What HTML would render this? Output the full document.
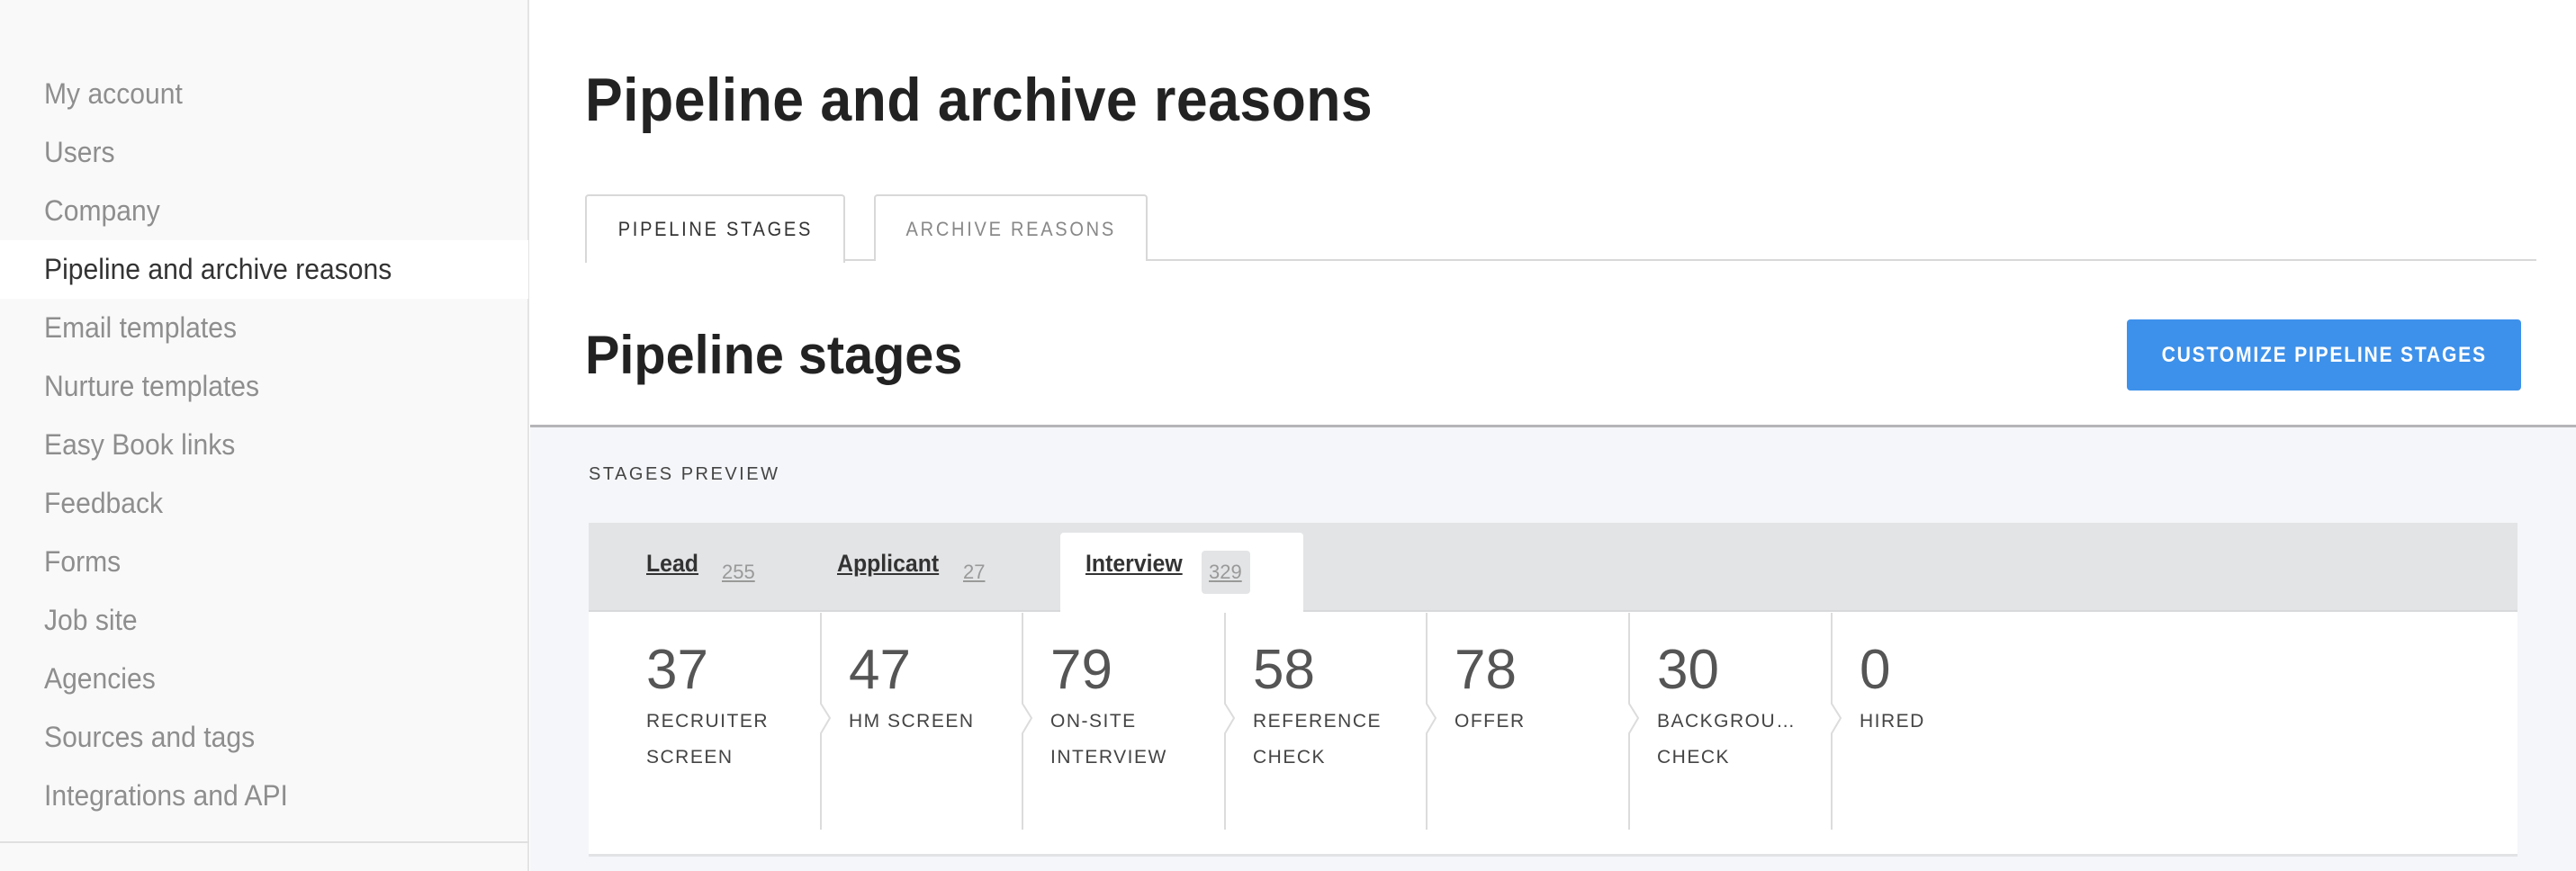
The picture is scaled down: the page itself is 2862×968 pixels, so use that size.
<!DOCTYPE html>
<html><head><meta charset="utf-8"><style>
*{margin:0;padding:0;box-sizing:border-box}
body{width:2862px;height:968px;overflow:hidden;background:#fff;font-family:"Liberation Sans Narrow","Liberation Sans",sans-serif;position:relative}
.side{position:absolute;left:0;top:0;width:588px;height:968px;background:#f9f9f9;border-right:2px solid #e4e4e4}
.side .bl{position:absolute;left:0;top:935px;width:588px;height:2px;background:#e0e0e0}
.nav{position:absolute;left:49px;font-size:32px;color:#8e8e8e;line-height:40px;transform:scaleX(0.94);transform-origin:0 0;white-space:nowrap}
.act{position:absolute;left:0;top:267px;width:587px;height:65px;background:#fff}
.abs{position:absolute}
h1{position:absolute;left:650px;top:72px;font-size:68px;font-weight:bold;color:#222;letter-spacing:0.5px;transform:scaleX(0.92);transform-origin:0 0;white-space:nowrap}
h2{position:absolute;left:650px;top:360px;font-size:60px;font-weight:bold;color:#222;transform:scaleX(0.96);transform-origin:0 0;white-space:nowrap}
.tab{position:absolute;top:216px;height:74px;border:2px solid #d8d8d8;border-bottom:none;border-radius:4px 4px 0 0;font-size:22px;letter-spacing:3px;text-align:center;line-height:74px;color:#333;background:#fff;white-space:nowrap}
.tab span,.btn span{display:inline-block;transform:scaleX(0.91)}
.btn{position:absolute;left:2363px;top:355px;width:438px;height:79px;background:#3e91ea;border-radius:4px;color:#fff;font-size:24px;font-weight:bold;letter-spacing:2px;text-align:center;line-height:79px;white-space:nowrap}
.btn span{transform:scaleX(0.88)}
.gray{position:absolute;left:589px;top:472px;width:2273px;height:496px;background:#f5f6f9;border-top:3px solid #b5b5b8}
.card{position:absolute;left:654px;top:581px;width:2143px;height:371px;background:#fff;border-bottom:3px solid #e2e3e5}
.strip{position:absolute;left:0;top:0;width:2143px;height:99px;background:#e3e4e6;border-bottom:2px solid #d8d9db}
.stab{position:absolute;font-size:27px;font-weight:bold;color:#333;text-decoration:underline;top:30px;transform:scaleX(0.92);transform-origin:0 0}
.cnt{position:absolute;font-size:22px;color:#999;text-decoration:underline;top:42px}
.col{position:absolute;top:100px;height:241px;width:225px}
.num{position:absolute;left:64px;top:28px;font-size:62px;color:#555}
.lbl{position:absolute;left:64px;top:101px;font-size:21px;letter-spacing:1.5px;color:#444;line-height:40px;white-space:nowrap}
</style></head><body>
<div class="side">
<div class="act"></div>
<div class="nav" style="top:84px">My account</div>
<div class="nav" style="top:149px">Users</div>
<div class="nav" style="top:214px">Company</div>
<div class="nav" style="top:279px;color:#333">Pipeline and archive reasons</div>
<div class="nav" style="top:344px">Email templates</div>
<div class="nav" style="top:409px">Nurture templates</div>
<div class="nav" style="top:474px">Easy Book links</div>
<div class="nav" style="top:539px">Feedback</div>
<div class="nav" style="top:604px">Forms</div>
<div class="nav" style="top:669px">Job site</div>
<div class="nav" style="top:734px">Agencies</div>
<div class="nav" style="top:799px">Sources and tags</div>
<div class="nav" style="top:864px">Integrations and API</div>
<div class="bl"></div>
</div>
<h1>Pipeline and archive reasons</h1>
<div class="abs" style="left:650px;top:288px;width:2168px;height:2px;background:#d8d8d8"></div>
<div class="tab" style="left:650px;width:289px;height:76px"><span>PIPELINE STAGES</span></div>
<div class="tab" style="left:971px;width:304px;color:#888"><span>ARCHIVE REASONS</span></div>
<h2>Pipeline stages</h2>
<div class="btn"><span>CUSTOMIZE PIPELINE STAGES</span></div>
<div class="gray"></div>
<div class="abs" style="left:654px;top:516px;font-size:20px;letter-spacing:2.5px;color:#444">STAGES PREVIEW</div>
<div class="card">
<div class="strip">
<div class="abs" style="left:524px;top:11px;width:270px;height:90px;background:#fff;border-radius:4px 4px 0 0"></div>
<div class="stab" style="left:64px">Lead</div><div class="cnt" style="left:148px">255</div>
<div class="stab" style="left:276px">Applicant</div><div class="cnt" style="left:416px">27</div>
<div class="stab" style="left:552px">Interview</div>
<div class="abs" style="left:681px;top:31px;width:54px;height:48px;background:#e3e4e6;border-radius:4px"></div>
<div class="cnt" style="left:689px">329</div>
</div>
<div class="col" style="left:0"><div class="num">37</div><div class="lbl">RECRUITER<br>SCREEN</div></div>
<div class="col" style="left:225px"><div class="num">47</div><div class="lbl">HM SCREEN</div></div>
<div class="col" style="left:449px"><div class="num">79</div><div class="lbl">ON-SITE<br>INTERVIEW</div></div>
<div class="col" style="left:674px"><div class="num">58</div><div class="lbl">REFERENCE<br>CHECK</div></div>
<div class="col" style="left:898px"><div class="num">78</div><div class="lbl">OFFER</div></div>
<div class="col" style="left:1123px"><div class="num">30</div><div class="lbl">BACKGROU…<br>CHECK</div></div>
<div class="col" style="left:1348px"><div class="num">0</div><div class="lbl">HIRED</div></div>
<svg class="abs" style="left:0;top:100px" width="2143" height="241">
<g fill="none" stroke="#dcdcdc" stroke-width="2">
<polyline points="258,0 258,101 268,117 258,134 258,241"/>
<polyline points="482,0 482,101 492,117 482,134 482,241"/>
<polyline points="707,0 707,101 717,117 707,134 707,241"/>
<polyline points="931,0 931,101 941,117 931,134 931,241"/>
<polyline points="1156,0 1156,101 1166,117 1156,134 1156,241"/>
<polyline points="1381,0 1381,101 1391,117 1381,134 1381,241"/>
</g></svg>
</div>
</body></html>
